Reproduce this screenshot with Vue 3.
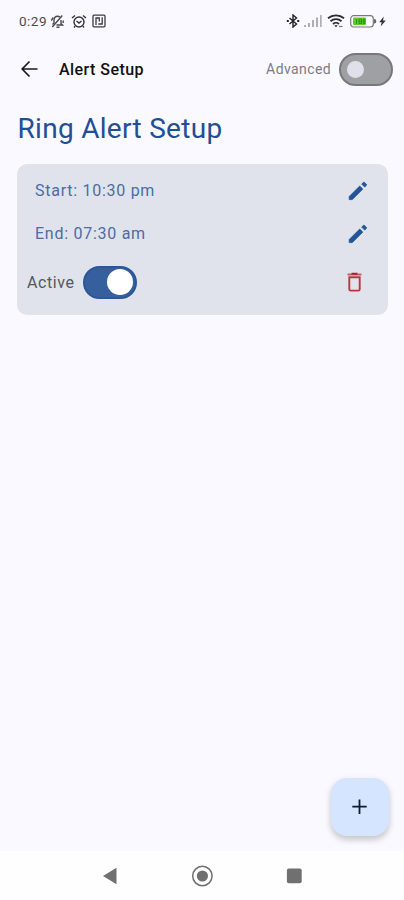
<script setup>
import { ref } from 'vue'

const advanced = ref(false)
const active = ref(true)
const times = [
  { label: 'Start', value: '10:30 pm' },
  { label: 'End', value: '07:30 am' }
]
</script>

<template>
  <div class="screen">
    <div class="status">
      <span class="clock">0:29</span>
      <svg class="bell" width="15" height="15" viewBox="0 0 15 15" fill="none" stroke="#4a4a4a" stroke-width="1.4">
        <path d="M2.500 10.500 4 9V6.500C4 3.500 5.500 2.300 7.500 2.300c1 0 1.800.3 2.400.9M11 6v3.500l1.500 1.500H6.500M6.500 13.200h3" />
        <path d="M12.300 1.500 2.300 13M1.300 6.500l2-3M13.200 6.500v2.500" />
      </svg>
      <svg class="alarm" width="16" height="15" viewBox="0 0 16 15" fill="none" stroke="#333" stroke-width="1.4">
        <circle cx="8" cy="8" r="5" />
        <path d="m1 4 3-2.500M15 4l-3-2.500M5.500 7 8 9l2.500-2M4 12.300l-1 1.200M12 12.300l1 1.200" />
      </svg>
      <svg class="nfc" width="14" height="14" viewBox="0 0 14 14" fill="none" stroke="#3c3c3c" stroke-width="1.300">
        <rect x="1" y="1.200" width="12" height="11.600" rx="1" />
        <path d="M4 11V4h3.300v3.500M6.300 10h3.900V3.300M4 4.200h3.500" />
      </svg>
      <span class="fill"></span>
      <svg class="bt" width="14" height="14" viewBox="0 0 14 14" fill="none" stroke="#222" stroke-width="1.400">
        <path d="m3.500 4 7 6L7 13V1l3.500 3-7 6" />
        <path d="M.8 7h2M11.200 7h2" stroke-width="1.800" />
      </svg>
      <svg class="signal" width="18" height="12" viewBox="0 0 18 12" fill="#b0b0b0">
        <rect x="0" y="10" width="2" height="2" />
        <rect x="4" y="8" width="2" height="4" />
        <rect x="8" y="5" width="2" height="7" />
        <rect x="12" y="2.500" width="2" height="9.500" />
        <rect x="16" y="0" width="1.700" height="12" />
      </svg>
      <svg class="wifi" width="18" height="14" viewBox="0 0 18 14" fill="none" stroke="#2b2b2b" stroke-width="1.800">
        <path d="M1 4.200c4.500-3.800 11.500-3.800 16 0M3.500 7.200c3.200-2.800 7.800-2.800 11 0M6 10c1.700-1.600 4.300-1.600 6 0" />
        <path d="m7.200 11.200 1.800 2 1.800-2z" fill="#2b2b2b" stroke="none" />
        <path d="M12 12.500h3.500" stroke-width="1.200" stroke="#777" />
      </svg>
      <svg class="battery" width="27" height="13" viewBox="0 0 27 13">
        <rect x=".7" y=".7" width="22.600" height="11.300" rx="3" fill="#fff" stroke="#777" stroke-width="1.200" />
        <rect x="3" y="2.600" width="13" height="7.500" rx="1" fill="#55d222" />
        <path d="M6.500 4v4.800M9 4.200h2.500v4.300H9zM9 6.300h2.500M13.300 4.200h1.400v4.300h-1.400z" fill="none" stroke="#2c7a13" stroke-width=".8" />
        <path d="M24.700 4.300c1.400.8 1.400 3.200 0 4z" fill="#555" stroke="#555" />
      </svg>
      <svg class="bolt" width="7" height="11" viewBox="0 0 7 11" fill="#333">
        <path d="M4.800.5.200 6.200h2.500l-1 4.300 5-6H4z" />
      </svg>
    </div>

    <header class="bar">
      <svg class="back" width="18" height="18" viewBox="0 0 18 18" fill="none" stroke="#1b1b1f" stroke-width="1.700">
        <path d="M16.500 9H1.500M8.500 1.500 1.200 9l7.300 7.500" />
      </svg>
      <span class="title">Alert Setup</span>
      <span class="advanced">Advanced</span>
      <button class="switch" :class="{ on: advanced }" aria-label="Advanced" @click="advanced = !advanced"><i></i></button>
    </header>

    <h1>Ring Alert Setup</h1>

    <section class="card">
      <div v-for="t in times" :key="t.label" class="row">
        <span class="time">{{ t.label }}: {{ t.value }}</span>
        <svg width="20" height="20" viewBox="0 0 20 20" fill="#225596" stroke="#225596" stroke-width=".8" stroke-linejoin="round">
          <path d="M1.200 15.500v3.100h3.100L14.800 8.100l-3.100-3.100zM18.300 4.500c.4-.4.400-.9 0-1.300l-1.700-1.700c-.4-.4-.9-.4-1.300 0l-1.600 1.600 3 3z" />
        </svg>
      </div>
      <div class="row active-row">
        <span class="active">Active</span>
        <button class="switch" :class="{ on: active }" aria-label="Active" @click="active = !active"><i></i></button>
        <svg class="trash" width="15" height="20" viewBox="0 0 15 20">
          <path d="M.5 2.500h14" fill="none" stroke="#c05a5f" stroke-width="1.900" />
          <path d="M4.500 1.700h6" fill="none" stroke="#b01c22" stroke-width="1.900" />
          <path d="M2.300 5.300h10.400v12q0 1.300-1.300 1.300H3.600q-1.300 0-1.300-1.300z" fill="none" stroke="#b9383d" stroke-width="1.900" />
        </svg>
      </div>
    </section>

    <div class="fab-wrap">
      <button class="fab" aria-label="Add">
        <svg width="16" height="16" viewBox="0 0 16 16" fill="none" stroke="#0d1b33" stroke-width="1.800"><path d="M7.500.5v14.400M.3 7.700h14.400" /></svg>
      </button>
    </div>

    <nav class="nav">
      <svg width="16" height="20" viewBox="0 0 16 20"><path d="M14.500 1.700v16.600L1 10z" fill="#707070" /></svg>
      <svg width="22" height="22" viewBox="0 0 22 22"><circle cx="11.400" cy="11" r="9.700" fill="none" stroke="#707070" stroke-width="1.500" /><circle cx="11.400" cy="11" r="5.600" fill="#707070" /></svg>
      <svg width="16" height="16" viewBox="0 0 16 16"><rect x=".9" y=".5" width="14.800" height="14.800" rx="2" fill="#707070" /></svg>
    </nav>
  </div>
</template>

<style>
body {
  margin: 0;
}
</style>

<style scoped>
.screen {
  width: 404px;
  height: 900px;
  box-sizing: border-box;
  display: flex;
  flex-direction: column;
  overflow: hidden;
  background: #faf9ff;
  font-family: Roboto, "Liberation Sans", sans-serif;
  color: #111114;
}
svg {
  display: block;
  flex: none;
}
span {
  white-space: nowrap;
}
.status {
  height: 42px;
  display: flex;
  align-items: center;
  padding: 0 18px 0 19px;
}
.clock {
  width: 31px;
  font-size: 13.5px;
  letter-spacing: 0.5px;
  color: #4a4a4d;
}
.alarm {
  margin-left: 6px;
}
.nfc {
  margin-left: 5px;
}
.fill {
  flex: 1;
}
.signal {
  margin-left: 4px;
}
.wifi {
  margin-left: 5px;
}
.battery {
  margin-left: 5px;
}
.bolt {
  margin-left: 2px;
}
.bar {
  height: 54px;
  display: flex;
  align-items: center;
  padding: 0 11px 0 21px;
}
.title {
  flex: 1;
  margin-left: 20px;
  font-size: 16px;
  font-weight: 500;
  letter-spacing: 0.45px;
}
.advanced {
  margin-right: 8px;
  font-size: 14px;
  letter-spacing: 0.4px;
  color: #7c7c81;
}
.switch {
  width: 54px;
  height: 33px;
  flex: none;
  box-sizing: border-box;
  display: flex;
  align-items: center;
  padding: 0 6px;
  border: 2px solid #77787b;
  border-radius: 17px;
  background: #9fa0a3;
}
.switch i {
  width: 17px;
  height: 17px;
  border-radius: 50%;
  background: #dfe1ea;
}
.switch.on {
  justify-content: flex-end;
  padding: 0 2px;
  border-color: #2a5797;
  background: #365f9e;
}
.switch.on i {
  width: 26px;
  height: 26px;
  background: #fff;
}
h1 {
  margin: 16px 0 0 17.5px;
  font-size: 28px;
  line-height: 34px;
  font-weight: 400;
  letter-spacing: 0.3px;
  color: #224f93;
}
.card {
  height: 151px;
  margin: 18px 16px 0 17px;
  box-sizing: border-box;
  padding: 5px 20px 0 18px;
  border-radius: 10px;
  background: #e0e3eb;
}
.row {
  height: 43px;
  display: flex;
  align-items: center;
  justify-content: space-between;
}
.time {
  font-size: 16px;
  letter-spacing: 0.73px;
  color: #4d6ca2;
}
.active-row {
  height: 54px;
  margin-left: -8px;
  padding-right: 6px;
}
.active {
  margin-right: 8px;
  font-size: 16px;
  letter-spacing: 0.6px;
  color: #55575c;
}
.trash {
  margin-left: auto;
}
.fab-wrap {
  flex: 1;
  display: flex;
  align-items: flex-end;
  justify-content: flex-end;
  padding: 0 15px 15px 0;
}
.fab {
  width: 58px;
  height: 58px;
  display: flex;
  align-items: center;
  justify-content: center;
  padding: 0;
  border: 0;
  border-radius: 16px;
  background: #d5e5ff;
  box-shadow: 0 4px 6px rgba(0, 0, 0, 0.18), 0 1px 8px rgba(0, 0, 0, 0.05);
}
.nav {
  height: 49px;
  display: flex;
  align-items: center;
  justify-content: space-between;
  padding: 0 102px;
  background: #fefefe;
}
</style>
